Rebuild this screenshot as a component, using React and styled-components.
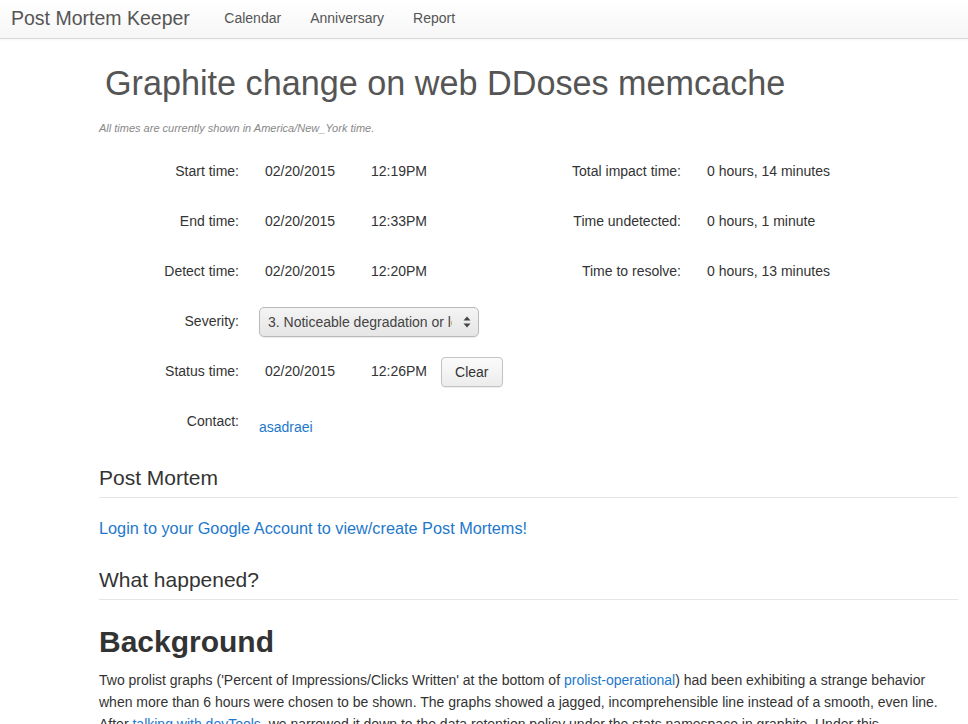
import React from 'react';
import styled, { createGlobalStyle } from 'styled-components';

const GlobalStyle = createGlobalStyle`
  html, body {
    margin: 0;
    padding: 0;
    background: #fff;
  }
  body {
    font-family: "Liberation Sans", Arial, Helvetica, sans-serif;
    font-size: 14px;
    line-height: 1.42857;
    color: #333;
  }
`;

const Navbar = styled.nav`
  display: flex;
  align-items: center;
  height: 38px;
  padding-left: 11px;
  background: linear-gradient(to bottom, #fff 0%, #f6f6f6 100%);
  border-bottom: 1px solid #d8d8d8;
  box-shadow: 0 1px 2px rgba(0, 0, 0, 0.04);
`;

const Brand = styled.a`
  font-size: 19.5px;
  color: #555;
  text-decoration: none;
  margin-right: 20px;
`;

const NavLink = styled.a`
  font-size: 14px;
  color: #555;
  text-decoration: none;
  padding: 0 14.5px;
`;

const Main = styled.main`
  padding: 0 10px 0 99px;
`;

const Title = styled.h1`
  margin: 26px 0 0 6px;
  font-size: 34.2px;
  font-weight: 400;
  line-height: 1.1;
  color: #555;
`;

const Note = styled.p`
  margin: 18px 0 0;
  font-size: 11px;
  font-style: italic;
  color: #888;
`;

const Details = styled.div`
  margin-top: 11px;
`;

const Row = styled.div`
  display: grid;
  grid-template-columns: 140px 250px 140px 1fr;
  column-gap: 26px;
  align-items: center;
  height: 50px;
`;

const Label = styled.div`
  text-align: right;
`;

const Values = styled.div`
  display: flex;
  align-items: center;
`;

const DateText = styled.span`
  width: 106px;
`;

const TimeText = styled.span`
  margin-right: 14px;
`;

const SelectWrap = styled.div`
  position: relative;
  width: 220px;
  margin-left: -6px;
`;

const Select = styled.select`
  appearance: none;
  -webkit-appearance: none;
  width: 220px;
  height: 30px;
  padding: 0 26px 0 8px;
  border: 1px solid #b9b9b9;
  border-radius: 5px;
  background: linear-gradient(to bottom, #f4f4f4, #e6e6e6);
  font-family: "Liberation Sans", Arial, sans-serif;
  font-size: 14px;
  color: #444;
  box-shadow: 0 1px 1px rgba(0, 0, 0, 0.08);
`;

const Arrows = styled.svg`
  position: absolute;
  right: 8px;
  top: 9px;
  pointer-events: none;
`;

const Button = styled.button`
  height: 30px;
  padding: 0 13px;
  border: 1px solid #c4c4c4;
  border-radius: 4px;
  background: linear-gradient(to bottom, #fbfbfb, #ececec);
  font-family: "Liberation Sans", Arial, sans-serif;
  font-size: 14px;
  color: #333;
  box-shadow: 0 1px 1px rgba(0, 0, 0, 0.08);
`;

const Link = styled.a`
  color: #1d78cc;
  text-decoration: none;
`;

const ContactLink = styled(Link)`
  margin-left: -6px;
  padding-top: 12px;
`;

const SectionHeader = styled.h3`
  margin: ${p => p.$top}px 0 0;
  padding-bottom: ${p => p.$pad}px;
  border-bottom: 1px solid #e5e5e5;
  font-size: 21px;
  font-weight: 400;
  line-height: 1.1;
  color: #333;
`;

const LoginLink = styled(Link)`
  display: block;
  margin-top: 19px;
  font-size: 16.3px;
  line-height: 22px;
`;

const Heading = styled.h1`
  margin: 25px 0 0;
  font-size: 30px;
  font-weight: 700;
  line-height: 1.1;
  color: #333;
`;

const Paragraph = styled.p`
  margin: 11px 0 0;
  font-size: 14px;
  line-height: 22px;
  color: #333;
`;

const rows = [
  { label: 'Start time:', date: '02/20/2015', time: '12:19PM', rLabel: 'Total impact time:', rValue: '0 hours, 14 minutes' },
  { label: 'End time:', date: '02/20/2015', time: '12:33PM', rLabel: 'Time undetected:', rValue: '0 hours, 1 minute' },
  { label: 'Detect time:', date: '02/20/2015', time: '12:20PM', rLabel: 'Time to resolve:', rValue: '0 hours, 13 minutes' },
];

function App() {
  return (
    <>
      <GlobalStyle />
      <Navbar>
        <Brand href="#">Post Mortem Keeper</Brand>
        <NavLink href="#">Calendar</NavLink>
        <NavLink href="#">Anniversary</NavLink>
        <NavLink href="#">Report</NavLink>
      </Navbar>
      <Main>
        <Title>Graphite change on web DDoses memcache</Title>
        <Note>All times are currently shown in America/New_York time.</Note>
        <Details>
          {rows.map(r => (
            <Row key={r.label}>
              <Label>{r.label}</Label>
              <Values>
                <DateText>{r.date}</DateText>
                <TimeText>{r.time}</TimeText>
              </Values>
              <Label>{r.rLabel}</Label>
              <div>{r.rValue}</div>
            </Row>
          ))}
          <Row>
            <Label>Severity:</Label>
            <Values>
              <SelectWrap>
                <Select defaultValue="3">
                  <option value="3">3. Noticeable degradation or loss of service</option>
                </Select>
                <Arrows width="8" height="12" viewBox="0 0 8 12">
                  <path d="M4 0.5L7.5 4.5H0.5Z" fill="#444" />
                  <path d="M4 11.5L7.5 7.5H0.5Z" fill="#444" />
                </Arrows>
              </SelectWrap>
            </Values>
          </Row>
          <Row>
            <Label>Status time:</Label>
            <Values>
              <DateText>02/20/2015</DateText>
              <TimeText>12:26PM</TimeText>
              <Button>Clear</Button>
            </Values>
          </Row>
          <Row>
            <Label>Contact:</Label>
            <Values>
              <ContactLink href="#">asadraei</ContactLink>
            </Values>
          </Row>
        </Details>
        <SectionHeader $top={19} $pad={8}>Post Mortem</SectionHeader>
        <LoginLink href="#">Login to your Google Account to view/create Post Mortems!</LoginLink>
        <SectionHeader $top={29} $pad={7}>What happened?</SectionHeader>
        <Heading>Background</Heading>
        <Paragraph>
          Two prolist graphs ('Percent of Impressions/Clicks Written' at the bottom of{' '}
          <Link href="#">prolist-operational</Link>) had been exhibiting a strange behavior
          when more than 6 hours were chosen to be shown. The graphs showed a jagged, incomprehensible line instead of a smooth, even line.
          After <Link href="#">talking with devTools</Link>, we narrowed it down to the data retention policy under the stats namespace in graphite. Under this
        </Paragraph>
      </Main>
    </>
  );
}

export default App;
